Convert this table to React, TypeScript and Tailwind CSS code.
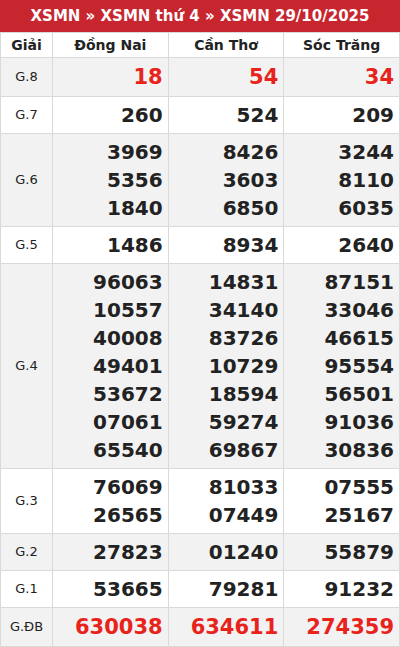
const provinces = ["Đồng Nai", "Cần Thơ", "Sóc Trăng"];

type Row = { label: string; values: string[][]; red?: boolean };

const rows: Row[] = [
  { label: "G.8", values: [["18"], ["54"], ["34"]], red: true },
  { label: "G.7", values: [["260"], ["524"], ["209"]] },
  {
    label: "G.6",
    values: [
      ["3969", "5356", "1840"],
      ["8426", "3603", "6850"],
      ["3244", "8110", "6035"],
    ],
  },
  { label: "G.5", values: [["1486"], ["8934"], ["2640"]] },
  {
    label: "G.4",
    values: [
      ["96063", "10557", "40008", "49401", "53672", "07061", "65540"],
      ["14831", "34140", "83726", "10729", "18594", "59274", "69867"],
      ["87151", "33046", "46615", "95554", "56501", "91036", "30836"],
    ],
  },
  {
    label: "G.3",
    values: [
      ["76069", "26565"],
      ["81033", "07449"],
      ["07555", "25167"],
    ],
  },
  { label: "G.2", values: [["27823"], ["01240"], ["55879"]] },
  { label: "G.1", values: [["53665"], ["79281"], ["91232"]] },
  { label: "G.ĐB", values: [["630038"], ["634611"], ["274359"]], red: true },
];

export default function App() {
  return (
    <div className="w-[400px] bg-white font-['DejaVu_Sans',sans-serif] text-[#222]">
      <div className="flex h-8 items-center justify-center bg-[#c7262f] text-[15px] font-bold text-white">
        XSMN » XSMN thứ 4 » XSMN 29/10/2025
      </div>
      <table className="w-full table-fixed border-collapse border border-[#d9d9d9]">
        <colgroup>
          <col className="w-[52px]" />
          <col />
          <col />
          <col />
        </colgroup>
        <thead>
          <tr className="h-[25px]">
            <th className="border border-[#d9d9d9] text-[14px] font-bold">Giải</th>
            {provinces.map((p) => (
              <th key={p} className="border border-[#d9d9d9] text-[14px] font-bold">
                {p}
              </th>
            ))}
          </tr>
        </thead>
        <tbody>
          {rows.map((r, i) => (
            <tr key={r.label} className={i % 2 === 0 ? "bg-[#f2f2f2]" : "bg-white"}>
              <td className="border border-[#d9d9d9] text-center text-[13px]">{r.label}</td>
              {r.values.map((col, j) => (
                <td
                  key={j}
                  className={`border border-[#d9d9d9] pr-[5px] text-right font-bold leading-[28px] ${
                    r.red ? "py-[5px] text-[21px] text-[#e8231b]" : "py-[4px] text-[20px] text-[#222]"
                  }`}
                >
                  {col.map((n) => (
                    <div key={n}>{n}</div>
                  ))}
                </td>
              ))}
            </tr>
          ))}
        </tbody>
      </table>
    </div>
  );
}
